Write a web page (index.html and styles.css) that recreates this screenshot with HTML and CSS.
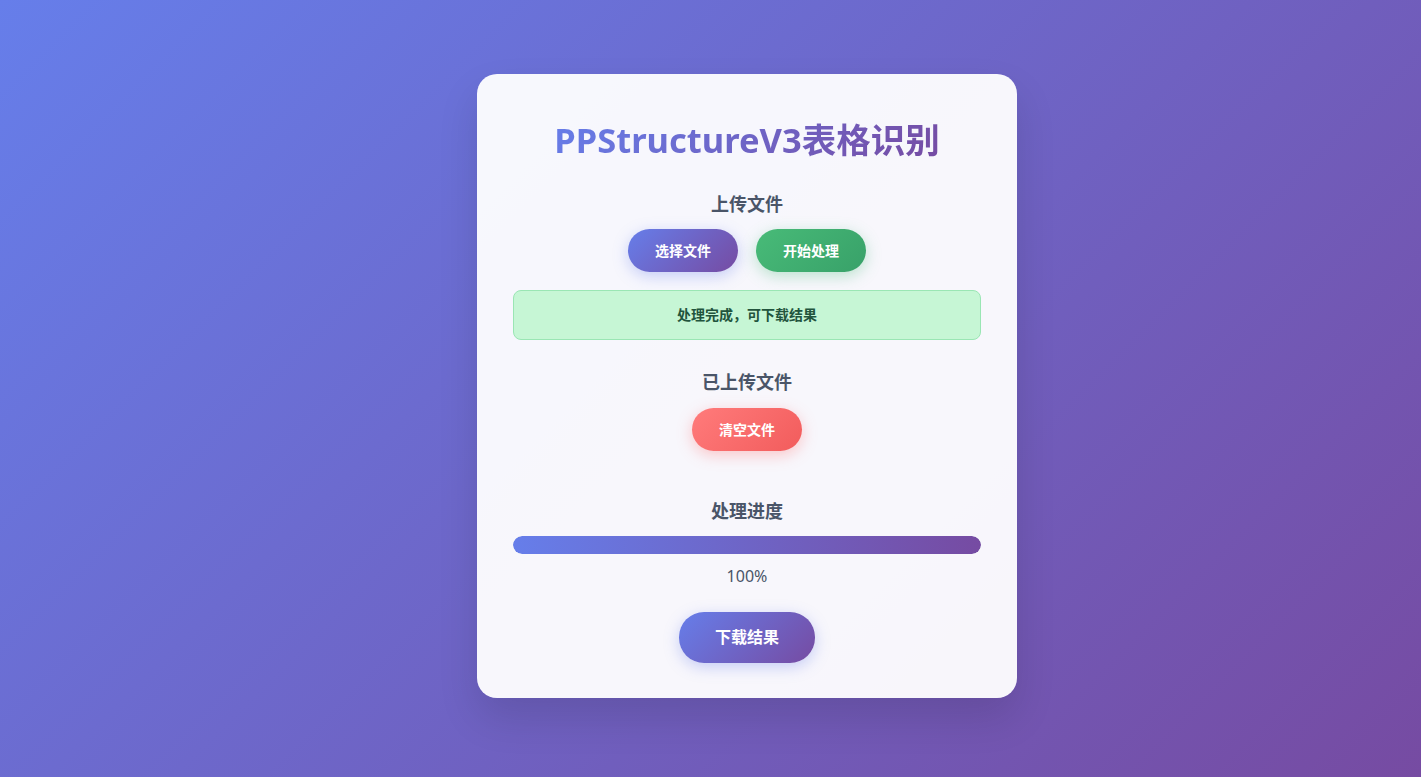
FILE: index.html
```html
<!DOCTYPE html>
<html lang="zh">
<head>
<meta charset="utf-8">
<title>PPStructureV3表格识别</title>
<link rel="stylesheet" href="styles.css">
</head>
<body>
<div class="page">
  <div class="card">
    <h1 class="title">PPStructureV3表格识别</h1>
    <h2 class="section-title first">上传文件</h2>
    <div class="btn-row">
      <button class="btn btn-primary">选择文件</button>
      <button class="btn btn-success">开始处理</button>
    </div>
    <div class="status">处理完成，可下载结果</div>
    <h2 class="section-title uploaded">已上传文件</h2>
    <div class="btn-row">
      <button class="btn btn-danger">清空文件</button>
    </div>
    <h2 class="section-title progress-title">处理进度</h2>
    <div class="progress"><div class="progress-fill" style="width:100%"></div></div>
    <div class="progress-text">100%</div>
    <div class="btn-row download-row">
      <button class="btn btn-primary btn-large">下载结果</button>
    </div>
  </div>
</div>
</body>
</html>
```
FILE: styles.css
```css
* { box-sizing: border-box; }
html, body { margin: 0; padding: 0; }
body {
  min-height: 100vh;
  background: linear-gradient(135deg, #667eea 0%, #764ba2 100%);
  font-family: "Noto Sans", "Noto Sans CJK SC", sans-serif;
  color: #4a5568;
}
.page {
  min-height: 100vh;
  display: flex;
  justify-content: center;
  align-items: flex-start;
  padding: 74px 0 0 73px;
}
.card {
  width: 540px;
  background: rgba(255, 255, 255, 0.95);
  border-radius: 20px;
  padding: 36px 36px 35px;
  box-shadow: 0 20px 40px rgba(0, 0, 0, 0.12);
  display: flex;
  flex-direction: column;
  align-items: stretch;
  text-align: center;
}
.title {
  margin: 8px 0 0;
  font-size: 34.5px;
  line-height: 44px;
  font-weight: 700;
  background: linear-gradient(135deg, #667eea 0%, #764ba2 100%);
  -webkit-background-clip: text;
  background-clip: text;
  color: transparent;
  align-self: center;
}
.section-title {
  margin: 0;
  font-size: 18px;
  line-height: 26px;
  font-weight: 700;
  color: #4a5568;
}
.section-title.first { margin-top: 29px; margin-bottom: 12px; }
.section-title.uploaded { margin-top: 29px; margin-bottom: 13px; }
.section-title.progress-title { margin-top: 47px; margin-bottom: 12px; }
.btn-row {
  display: flex;
  justify-content: center;
  gap: 18px;
}
.btn {
  border: none;
  border-radius: 25px;
  font-family: "Noto Sans", "Noto Sans CJK SC", sans-serif;
  font-size: 14px;
  font-weight: 700;
  color: #fff;
  height: 43px;
  padding: 0 27px;
  line-height: 43px;
  cursor: pointer;
}
.btn-primary {
  background: linear-gradient(135deg, #667eea 0%, #764ba2 100%);
  box-shadow: 0 4px 15px rgba(102, 126, 234, 0.35);
}
.btn-success {
  background: linear-gradient(135deg, #48bb78 0%, #38a169 100%);
  box-shadow: 0 4px 15px rgba(72, 187, 120, 0.35);
}
.btn-danger {
  background: linear-gradient(135deg, #ff7b7b 0%, #f25c5c 100%);
  box-shadow: 0 4px 15px rgba(255, 107, 107, 0.35);
}
.btn-large {
  height: 51px;
  line-height: 51px;
  font-size: 16px;
  padding: 0 36px;
}
.status {
  margin-top: 18px;
  height: 50px;
  line-height: 48px;
  background: #c6f6d5;
  border: 1px solid #9ae6b4;
  border-radius: 8px;
  color: #22543d;
  font-size: 14px;
  font-weight: 700;
}
.progress {
  height: 18px;
  border-radius: 9px;
  background: #e2e8f0;
  overflow: hidden;
}
.progress-fill {
  height: 100%;
  border-radius: 9px;
  background: linear-gradient(90deg, #667eea 0%, #764ba2 100%);
}
.progress-text {
  margin-top: 10px;
  font-size: 16px;
  line-height: 24px;
  color: #4a5568;
}
.download-row { margin-top: 24px; }
```
